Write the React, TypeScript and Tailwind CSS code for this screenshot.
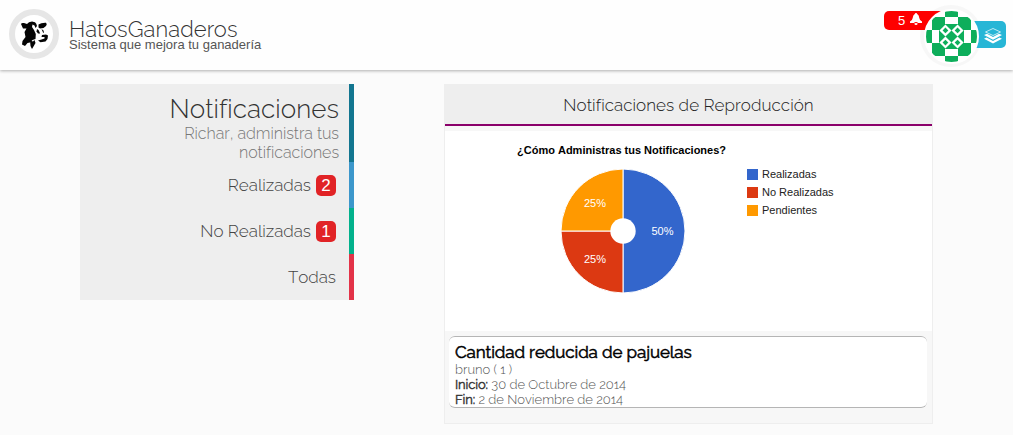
import React from 'react';

const CELLS = [
  [0, 0, 0, 1, 1, 0, 0, 0],
  [0, 1, 1, 0, 0, 1, 1, 0],
  [0, 1, 1, 1, 1, 1, 1, 0],
  [1, 0, 1, 1, 1, 1, 0, 1],
  [1, 0, 1, 1, 1, 1, 0, 1],
  [0, 1, 1, 1, 1, 1, 1, 0],
  [0, 1, 1, 0, 0, 1, 1, 0],
  [0, 0, 0, 1, 1, 0, 0, 0],
];

function CowLogo() {
  return (
    <div className="h-[50px] w-[50px] shrink-0 rounded-full border-[6px] border-[#e6e6e6] bg-white">
      <svg viewBox="0 0 38 38" className="h-[38px] w-[38px]" fill="#050505">
        <path d="M6 9 Q6.500 7.500 9 8 L12 9 Q13.500 6.800 17 6.500 L20 7.300 Q21.500 8.500 22 11 L20.500 13 L19.500 10.500 L17.500 9.500 L17 12 L19 15 L20.800 19 L20.500 24 L17.500 25 L15 27.500 L12.500 28 L10 31 L7 29.500 L7.500 26 L10.500 22 L9.500 17 L11.500 13.500 L8 13.500 Z" />
        <path d="M23.500 9.500 Q26 7.500 31 7.700 Q32.500 9 31 11 Q29 13.500 25 13.500 L23.500 12.500 Z" />
        <path d="M22 14 L23.500 15 L25.200 18.500 L23 18.500 L21.500 16.500 Z" />
        <path d="M27 20 L31 19.500 L33 20.500 L32.500 24 L30.500 26.500 L25.500 27.300 L23 25.500 L26.500 24.500 L29.500 23.500 L29.500 22 L26.500 22 Z" />
        <path d="M15 25.500 L18 26.500 L19.500 25 L20.500 28 L18.500 31.500 L17 34 L15.500 31 Z" />
        <path d="M26.500 14 L28.500 15.500 L29 18 L28 17.500 Z" />
      </svg>
    </div>
  );
}

function Avatar() {
  return (
    <div className="absolute left-[924px] top-[9px] h-[55px] w-[55px] rounded-full border-2 border-white bg-white">
      <svg viewBox="0 0 16 16" className="h-[51px] w-[51px] rounded-full">
        <rect width="16" height="16" fill="#fff" />
        <g fill="#0eae5b" shapeRendering="crispEdges">
          {CELLS.map((row, y) =>
            row.map((on, x) => (on ? <rect key={`${x}-${y}`} x={x * 2} y={y * 2} width="2" height="2" /> : null)),
          )}
        </g>
        {[6.1, 9.9].map((cx) =>
          [6.1, 9.9].map((cy) => (
            <g key={`${cx}-${cy}`}>
              <path d={`M${cx} ${cy - 1.9} l1.9 1.9 l-1.9 1.9 l-1.9 -1.9 z`} fill="#fff" />
              <path d={`M${cx} ${cy - 0.9} l.9 .9 l-.9 .9 l-.9 -.9 z`} fill="#0eae5b" />
            </g>
          )),
        )}
      </svg>
    </div>
  );
}

function Header() {
  return (
    <header className="relative flex h-[70px] w-full bg-[#fefefe] pl-[9px] pt-[9px] shadow-[0_1px_3px_rgba(0,0,0,0.3)]">
      <CowLogo />
      <div className="ml-[10px] pt-[11px]">
        <div className="whitespace-nowrap text-[22px] font-light leading-[18px] tracking-[0.1px] text-[#333]">HatosGanaderos</div>
        <div className="whitespace-nowrap font-['Liberation_Sans',sans-serif] text-[13px] leading-[13px] text-[#555]">
          Sistema que mejora tu ganadería
        </div>
      </div>
      <div className="absolute left-[920px] top-[5px] h-[62px] w-[62px] rounded-full bg-[#f7f7f7]" />
      <div className="absolute left-[884px] top-[11px] flex h-[19px] w-[60px] items-center rounded-[5px] bg-[#fe0000] pl-[14px] font-['Liberation_Sans',sans-serif] text-[13px] text-white">
        <span>5</span>
        <svg viewBox="0 0 12 12" className="mb-[4px] ml-[5px] h-[12px] w-[12px]" fill="#fff">
          <path d="M6 0 Q7 0 7.200 1 Q9 2 9.300 5 Q9.600 7.500 12 8.500 V10 H8 Q7.500 9 6 9 Q4.500 9 4 10 H0 V8.500 Q2.400 7.500 2.700 5 Q3 2 4.800 1 Q5 0 6 0 Z M4.300 10.500 Q6 9.500 7.700 10.500 Q7.500 12 6 12 Q4.500 12 4.300 10.500 Z" />
        </svg>
      </div>
      <div className="absolute left-[966px] top-[21px] h-[27px] w-[40px] rounded-[5px] bg-[#27b6d6]">
        <svg viewBox="0 0 20 16" className="ml-[17px] mt-[7px] h-[16px] w-[20px]" fill="#fff">
          <path d="M10 .5 L17.500 4 L10 7.500 L2.500 4 Z" fill="none" stroke="#fff" strokeWidth=".7" />
          <path d="M1 7 L4 5.800 L10 9 L16 5.800 L19 7 L10 11.700 Z" />
          <path d="M1 10.700 L3.500 9.600 L10 13 L16.500 9.600 L19 10.700 L10 15.600 Z" />
        </svg>
      </div>
      <Avatar />
    </header>
  );
}

function Badge({ children }: { children: React.ReactNode }) {
  return (
    <span className="ml-[5px] flex h-[21px] w-[20px] items-center justify-center rounded-[5px] bg-[#e12326] pt-px font-['Liberation_Sans',sans-serif] text-[17px] leading-none text-white">
      {children}
    </span>
  );
}

function Sidebar() {
  return (
    <aside className="w-[274px] text-right [font-kerning:none]">
      <div className="h-[78px] border-r-[5px] border-[#137690] bg-[#eee] pr-[10px] pt-[9px]">
        <h1 className="text-[26px] font-light leading-[33px] tracking-[0.07px] text-[#333]">Notificaciones</h1>
        <p className="-mt-[2px] text-[16px] font-light leading-[19px] tracking-[-0.04px] text-[#777]">
          Richar, administra tus
          <br />
          notificaciones
        </p>
      </div>
      <div className="flex h-[46px] items-center justify-end border-r-[5px] border-[#3c97cb] bg-[#eee] pr-[13px] text-[17px] font-light text-[#444]">
        <span className="pt-[2px]">Realizadas</span>
        <Badge>2</Badge>
      </div>
      <div className="flex h-[46px] items-center justify-end border-r-[5px] border-[#02b18c] bg-[#eee] pr-[13px] text-[17px] font-light text-[#444]">
        <span className="pt-[2px]">No Realizadas</span>
        <Badge>1</Badge>
      </div>
      <div className="flex h-[46px] items-center justify-end border-r-[5px] border-[#e33348] bg-[#eee] pr-[13px] text-[17px] font-light text-[#444]">
        <span className="pt-[2px]">Todas</span>
      </div>
    </aside>
  );
}

const LEGEND = [
  { label: 'Realizadas', color: 'bg-[#3366cc]' },
  { label: 'No Realizadas', color: 'bg-[#dc3912]' },
  { label: 'Pendientes', color: 'bg-[#ff9900]' },
];

function Chart() {
  return (
    <div className="h-[200px] bg-white pt-[12px] font-['Liberation_Sans',sans-serif] text-[11px]">
      <div className="pl-[72px] font-bold leading-[15px] text-black">¿Cómo Administras tus Notificaciones?</div>
      <div className="flex pl-[115px] pt-[10px]">
        <svg viewBox="0 0 126 126" className="h-[126px] w-[126px] shrink-0">
          <g stroke="#fff" strokeWidth="1">
            <path d="M63 1 A62 62 0 0 1 63 125 Z" fill="#3366cc" />
            <path d="M63 125 A62 62 0 0 1 1 63 H63 Z" fill="#dc3912" />
            <path d="M1 63 A62 62 0 0 1 63 1 V63 Z" fill="#ff9900" />
          </g>
          <circle cx="63" cy="63" r="12.700" fill="#fff" />
          <g fill="#fff" fontSize="11" textAnchor="middle">
            <text x="102.500" y="67">50%</text>
            <text x="35" y="39">25%</text>
            <text x="35" y="95">25%</text>
          </g>
        </svg>
        <ul className="ml-[61px] mt-px flex flex-col gap-[7px] text-[#222]">
          {LEGEND.map((item) => (
            <li key={item.label} className="flex h-[11px] items-center leading-[11px]">
              <span className={`mr-[4px] h-[11px] w-[11px] ${item.color}`} />
              {item.label}
            </li>
          ))}
        </ul>
      </div>
    </div>
  );
}

function Panel() {
  return (
    <section className="h-[340px] w-[489px] border border-t-0 border-[#eee] bg-[#f7f7f7] [font-kerning:none]">
      <h2 className="-mx-px flex h-[40px] items-center justify-center bg-[#eee] pt-[3px] text-[17px] font-light tracking-[0.05px] text-[#222]">
        Notificaciones de Reproducción
      </h2>
      <div className="mb-[5px] h-[2px] bg-[#8a006a]" />
      <Chart />
      <article className="ml-[4px] mr-[5px] mt-[5px] h-[72px] rounded-[6px] border-y border-[#b5b5b5] bg-white pl-[6px] pt-[5px] text-[13px] leading-[15px] text-[#555]">
        <h3 className="h-[20px] text-[17px] font-normal leading-[20px] tracking-[-0.1px] text-black [-webkit-text-stroke:0.5px_black]">
          Cantidad reducida de pajuelas
        </h3>
        <p className="font-light">bruno ( 1 )</p>
        <p className="font-light">
          <b className="font-normal tracking-[-0.12px] text-[#333] [-webkit-text-stroke:0.4px_#333]">Inicio:</b> 30 de Octubre de 2014
        </p>
        <p className="font-light">
          <b className="font-normal tracking-[-0.12px] text-[#333] [-webkit-text-stroke:0.4px_#333]">Fin:</b> 2 de Noviembre de 2014
        </p>
      </article>
    </section>
  );
}

export default function App() {
  return (
    <div className="h-[435px] w-[1013px] overflow-hidden bg-[#fbfbfb] font-['Raleway','Lato',sans-serif]">
      <Header />
      <main className="flex gap-[90px] pl-[80px] pt-[14px]">
        <Sidebar />
        <Panel />
      </main>
    </div>
  );
}
